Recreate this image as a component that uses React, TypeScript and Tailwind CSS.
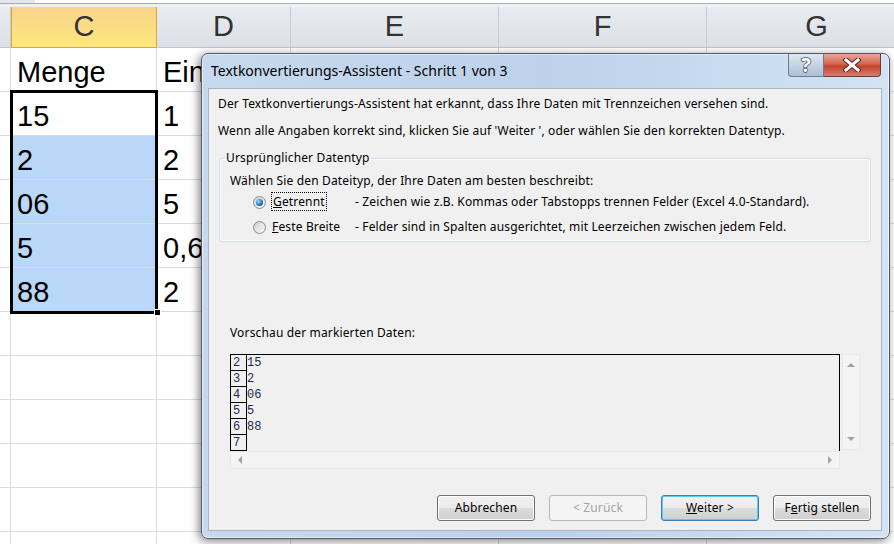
import React from "react";

const ui = "font-['Noto_Sans','Liberation_Sans',sans-serif]";

// spreadsheet rows: C / D column values
const sheetRows = [
  { c: "Menge", d: "Ein" },
  { c: "15", d: "1" },
  { c: "2", d: "2" },
  { c: "06", d: "5" },
  { c: "5", d: "0,6" },
  { c: "88", d: "2" },
  { c: "", d: "" },
  { c: "", d: "" },
  { c: "", d: "" },
  { c: "", d: "" },
  { c: "", d: "" },
  { c: "", d: "" },
];

const previewRows = [
  { n: "2", v: "15" },
  { n: "3", v: "2" },
  { n: "4", v: "06" },
  { n: "5", v: "5" },
  { n: "6", v: "88" },
  { n: "7", v: "" },
];

function HeaderCell({ label, w, active }: { label: string; w: string; active?: boolean }) {
  if (active) {
    return (
      <div
        className={`${w} flex h-[41px] shrink-0 items-center justify-center border-x border-b border-[#e2a33e] bg-linear-to-b from-[#f8d48c] to-[#fee87c] text-[29px] text-[#333]`}
      >
        {label}
      </div>
    );
  }
  return (
    <div
      className={`${w} flex h-[41px] shrink-0 items-center justify-center border-r border-b border-r-[#c6ccd4] border-b-[#bfc6cf] bg-linear-to-b from-[#e8ebef] to-[#dde1e7] text-[29px] text-[#333]`}
    >
      {label}
    </div>
  );
}

function Sheet() {
  return (
    <div className="flex flex-col font-['Liberation_Sans',Arial,sans-serif]">
      {/* formula bar remnant */}
      <div className="flex h-[3px]">
        <div className="w-[35px] bg-[#e4e7eb]" />
        <div className="flex-1 bg-white" />
      </div>
      <div className="h-px bg-[#a6acb4]" />
      <div className="h-[3px] bg-[#eef0f3]" />
      {/* column header */}
      <div className="flex">
        <HeaderCell label="" w="w-[11px]" />
        <HeaderCell label="C" w="w-[146px]" active />
        <HeaderCell label="D" w="w-[134px]" />
        <HeaderCell label="E" w="w-[208px]" />
        <HeaderCell label="F" w="w-[208px]" />
        <HeaderCell label="G" w="w-[220px]" />
      </div>
      {sheetRows.map((r, i) => (
        <div key={i} className="flex h-[44px] text-[29px] leading-[48px] text-black">
          <div className="w-[11px] shrink-0 border-r border-b border-[#dadcdd]" />
          <div
            className={
              i >= 2 && i <= 5
                ? "w-[146px] shrink-0 border-r border-b border-[#dadcdd] bg-[#b9d8f8] pl-[6px]"
                : "w-[146px] shrink-0 border-r border-b border-[#dadcdd] pl-[6px]"
            }
          >
            {r.c}
          </div>
          <div className="w-[134px] shrink-0 whitespace-nowrap border-r border-b border-[#dadcdd] pl-[6px]">
            {r.d}
          </div>
          <div className="w-[208px] shrink-0 border-r border-b border-[#dadcdd]" />
          <div className="w-[208px] shrink-0 border-r border-b border-[#dadcdd]" />
          <div className="w-[220px] shrink-0 border-b border-[#dadcdd]" />
        </div>
      ))}
    </div>
  );
}

function Radio({ checked }: { checked?: boolean }) {
  return (
    <span className="flex h-[13px] w-[13px] shrink-0 items-center justify-center rounded-full border border-[#8a8c8e] bg-linear-to-br from-[#cfd1d3] to-[#fbfbfb]">
      {checked && (
        <span className="h-[7px] w-[7px] rounded-full bg-[radial-gradient(circle_at_35%_35%,#9ddcfb,#1d77c2_55%,#0c3d70)]" />
      )}
    </span>
  );
}

function Btn({ children, kind }: { children: React.ReactNode; kind?: "disabled" | "focus" }) {
  if (kind === "disabled") {
    return (
      <div className="flex h-[26px] w-[98px] items-center justify-center rounded-[3px] border border-[#b4b8bb] bg-[#f4f4f4] text-[12px] text-[#a3a3a3]">
        {children}
      </div>
    );
  }
  if (kind === "focus") {
    return (
      <div className="flex h-[26px] w-[98px] items-center justify-center rounded-[3px] border border-[#3c7fb1] bg-[linear-gradient(#f2f2f2,#ebebeb_50%,#dddddd_50%,#cfcfcf)] text-[12px] text-black shadow-[inset_0_0_0_1px_#5ccbf2]">
        {children}
      </div>
    );
  }
  return (
    <div className="flex h-[26px] w-[98px] items-center justify-center rounded-[3px] border border-[#707070] bg-[linear-gradient(#f2f2f2,#ebebeb_50%,#dddddd_50%,#cfcfcf)] text-[12px] text-black shadow-[inset_0_0_0_1px_#fcfcfc]">
      {children}
    </div>
  );
}

function Arrow({ dir }: { dir: "up" | "down" | "left" | "right" }) {
  const pts = {
    up: "0,4 4,0 8,4",
    down: "0,0 8,0 4,4",
    left: "4,0 4,8 0,4",
    right: "0,0 0,8 4,4",
  }[dir];
  const vertical = dir === "up" || dir === "down";
  return (
    <svg width={vertical ? 8 : 4} height={vertical ? 4 : 8} viewBox={vertical ? "0 0 8 4" : "0 0 4 8"}>
      <polygon points={pts} fill="#a3a3a3" />
    </svg>
  );
}

function Dialog() {
  return (
    <div
      className={`${ui} absolute left-[201px] top-[53px] flex h-[486px] w-[689px] flex-col rounded-[7px] border border-[#505a68] bg-linear-to-r from-[#c7d9ee] via-[#bcd2ea] to-[#d3e3f3] text-black shadow-[inset_0_0_0_1px_rgba(255,255,255,0.55),-2px_2px_10px_rgba(0,0,0,0.5)]`}
    >
      {/* title bar */}
      <div className="flex h-[34px] shrink-0">
        <div className="flex-1 pl-[9px] pt-[6px] text-[14px] leading-[22px]">
          Textkonvertierungs-Assistent - Schritt 1 von 3
        </div>
        <div className="mr-[8px] flex h-[23px] items-start">
          <div className="flex h-[23px] w-[36px] items-center justify-center rounded-bl-[4px] border border-t-0 border-[#6d7d90] bg-linear-to-b from-[#dfe7f0] to-[#aebfd2] text-[20px] font-bold leading-none text-white [-webkit-text-stroke:1.5px_#4a5566] [paint-order:stroke]">
            ?
          </div>
          <div className="flex h-[23px] w-[57px] items-center justify-center rounded-br-[4px] border border-l-0 border-t-0 border-[#6d3a34] bg-[linear-gradient(#e9a596,#d66550_45%,#c4412c_55%,#d6806f)]">
            <svg width="20" height="14" viewBox="0 0 20 14">
              <path d="M4 2 L16 12 M16 2 L4 12" stroke="#4a2a26" strokeWidth="5" strokeLinecap="square" />
              <path d="M4 2 L16 12 M16 2 L4 12" stroke="#ffffff" strokeWidth="3" strokeLinecap="square" />
            </svg>
          </div>
        </div>
      </div>

      {/* client area */}
      <div className="ml-[6px] mr-[7px] mb-[7px] flex flex-1 flex-col border border-[#a6b4c4] bg-[#f0f0f0] text-[12px] leading-[16px] tracking-[0.15px]">
        <div className="ml-[9px] mt-[7px]">
          Der Textkonvertierungs-Assistent hat erkannt, dass Ihre Daten mit Trennzeichen versehen sind.
        </div>
        <div className="ml-[9px] mt-[11px]">
          Wenn alle Angaben korrekt sind, klicken Sie auf 'Weiter ', oder wählen Sie den korrekten Datentyp.
        </div>

        <fieldset className="ml-[10px] mr-[10px] mt-[11px] rounded-[3px] border border-[#d5dfe5] pb-[6px] shadow-[inset_0_0_0_1px_#fbfbfb]">
          <legend className="ml-[5px] px-[1px]">Ursprünglicher Datentyp</legend>
          <div className="ml-[10px] mt-[7px]">Wählen Sie den Dateityp, der Ihre Daten am besten beschreibt:</div>
          <div className="mt-[5px] flex h-[16px] items-center pl-[33px]">
            <Radio checked />
            <span className="ml-[5px] w-[84px]">
              <span className="border border-dotted border-black px-[1px]">
                <span className="underline">G</span>etrennt
              </span>
            </span>
            <span>- Zeichen wie z.B. Kommas oder Tabstopps trennen Felder (Excel 4.0-Standard).</span>
          </div>
          <div className="mt-[9px] flex h-[16px] items-center pl-[33px]">
            <Radio />
            <span className="ml-[6px] w-[83px]">
              <span className="underline">F</span>este Breite
            </span>
            <span>- Felder sind in Spalten ausgerichtet, mit Leerzeichen zwischen jedem Feld.</span>
          </div>
        </fieldset>

        <div className="ml-[21px] mt-[83px]">Vorschau der markierten Daten:</div>

        {/* preview */}
        <div className="ml-[21px] mt-[13px] grid grid-cols-[610px_18px] gap-x-[2px] tracking-normal">
          <div className="h-[97px] overflow-hidden border-x border-t border-black font-['Liberation_Mono',monospace] text-[12px] leading-[15px] text-[#1f2850]">
            {previewRows.map((r) => (
              <div key={r.n} className="flex h-[16px]">
                <div className="w-[16px] shrink-0 border-r border-b border-black pl-[2px] pt-[1px]">{r.n}</div>
                <div className="pt-[1px]">{r.v}</div>
              </div>
            ))}
          </div>
          <div className="flex h-[96px] flex-col items-center justify-between border border-[#e8e8e8] bg-[#f4f4f4] py-[8px]">
            <Arrow dir="up" />
            <Arrow dir="down" />
          </div>
          <div className="flex h-[18px] items-center justify-between border border-[#e8e8e8] bg-[#f4f4f4] px-[7px]">
            <Arrow dir="left" />
            <Arrow dir="right" />
          </div>
        </div>

        <div className="mt-auto mb-[9px] mr-[10px] flex justify-end gap-[14px]">
          <Btn>Abbrechen</Btn>
          <Btn kind="disabled">&lt; Zurück</Btn>
          <Btn kind="focus">
            <span>
              <span className="underline">W</span>eiter &gt;
            </span>
          </Btn>
          <Btn>
            <span>
              F<span className="underline">e</span>rtig stellen
            </span>
          </Btn>
        </div>
      </div>
    </div>
  );
}

export default function App() {
  return (
    <div className="relative h-[544px] w-[894px] overflow-hidden bg-white">
      <Sheet />
      {/* selection frame over C2:C6 */}
      <div className="absolute left-[10px] top-[90px] h-[224px] w-[148px] border-[3px] border-black" />
      <div className="absolute left-[154px] top-[309px] h-[7px] w-[7px] border border-white bg-black" />
      <Dialog />
    </div>
  );
}
